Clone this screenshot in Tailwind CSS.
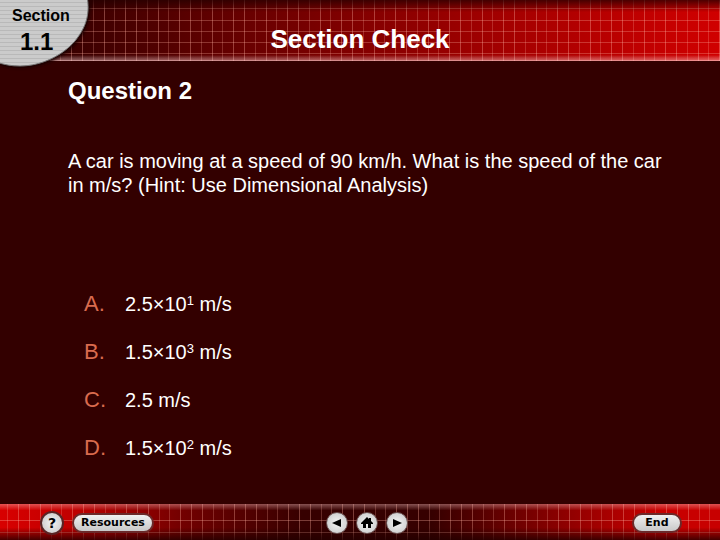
<!doctype html>
<html lang="en">
  <head>
    <meta charset="UTF-8" />
    <meta name="viewport" content="width=device-width, initial-scale=1.0" />
    <title>Section Check</title>
    <script src="https://cdn.jsdelivr.net/npm/@tailwindcss/browser@4"></script>
  </head>
  <body
    class="flex min-h-screen flex-col bg-[#330000] font-['Liberation_Sans',Arial,sans-serif] text-white">
    <!-- Header -->
    <header class="relative flex h-[61px] items-end justify-center pb-1">
      <svg class="absolute inset-0 h-full w-full" aria-hidden="true">
        <defs>
          <linearGradient id="head-red">
            <stop offset="0.1" stop-color="#3a0000" />
            <stop offset="0.35" stop-color="#6a0000" />
            <stop offset="0.65" stop-color="#9c0000" />
            <stop offset="1" stop-color="#d00000" />
          </linearGradient>
          <linearGradient id="head-shade" x2="0" y2="1">
            <stop offset="0" stop-color="#200" stop-opacity="0.75" />
            <stop offset="0.2" stop-color="#200" stop-opacity="0" />
            <stop offset="0.9" stop-color="#fff" stop-opacity="0" />
            <stop offset="1" stop-color="#fcc" stop-opacity="0.5" />
          </linearGradient>
          <pattern id="head-cols" x="28" width="54" height="61" patternUnits="userSpaceOnUse">
            <path d="M0.5 0V61M22.5 0V61M43.5 0V61" stroke="#ffb0a0" stroke-opacity="0.36" />
            <path d="M11.5 0V61M32.5 0V61" stroke="#ffb0a0" stroke-opacity="0.24" />
          </pattern>
        </defs>
        <rect width="100%" height="61" fill="url(#head-red)" />
        <rect width="100%" height="61" fill="url(#head-cols)" />
        <g fill="#ffb0a0" fill-opacity="0.3">
          <rect y="8" width="100%" height="1" />
          <rect y="20" width="100%" height="1" />
          <rect y="31" width="100%" height="1" />
          <rect y="42" width="100%" height="1" />
          <rect y="53" width="100%" height="1" />
        </g>
        <rect width="100%" height="61" fill="url(#head-shade)" />
        <rect y="60" width="100%" height="1" fill="#ffd0d0" fill-opacity="0.4" />
      </svg>
      <h1 class="relative text-[26px] leading-9 font-bold">Section Check</h1>

      <!-- Section badge -->
      <div class="absolute top-0 left-0 h-[72px] w-24 text-black">
        <svg class="absolute inset-0" width="96" height="72" viewBox="0 0 96 72" aria-hidden="true">
          <defs>
            <pattern id="badge-lines" width="4" height="4" patternUnits="userSpaceOnUse">
              <rect width="4" height="4" fill="#cbcbcb" />
              <rect y="2" width="4" height="1" fill="#b9b9b9" />
            </pattern>
            <filter id="badge-blur" x="-10%" y="-10%" width="120%" height="120%">
              <feGaussianBlur stdDeviation="1.5" />
            </filter>
          </defs>
          <path d="M-4 -4H89C92 14 89 27 77 42C65 57 43 68 20 68C12 68 5 67 -4 64Z" fill="#150000" filter="url(#badge-blur)" />
          <path d="M-4 -4H87C90 13 87 26 75 41C63 55 42 66 20 66C12 66 5 65 -4 62Z" fill="url(#badge-lines)" stroke="#777" stroke-width="1" />
        </svg>
        <p class="relative flex flex-col pt-2 pl-3 font-bold">
          <span class="text-base leading-4">Section</span>
          <span class="pt-1 pl-2 text-2xl leading-7">1.1</span>
        </p>
      </div>
    </header>

    <!-- Question -->
    <main class="flex-1 pr-10 pl-[68px]">
      <h2 class="pt-4 text-2xl leading-7 font-bold">Question 2</h2>
      <p class="pt-11 text-xl leading-6">
        A car is moving at a speed of 90 km/h. What is the speed of the car in
        m/s? (Hint: Use Dimensional Analysis)
      </p>
      <ol class="mt-[93px] flex flex-col gap-5 pl-4 text-xl leading-7">
        <li class="flex">
          <span class="w-[41px] text-[22px] text-[#d96b4e]">A.</span>
          <span>2.5×10<sup class="text-[13px]">1</sup> m/s</span>
        </li>
        <li class="flex">
          <span class="w-[41px] text-[22px] text-[#d96b4e]">B.</span>
          <span>1.5×10<sup class="text-[13px]">3</sup> m/s</span>
        </li>
        <li class="flex">
          <span class="w-[41px] text-[22px] text-[#d96b4e]">C.</span>
          <span>2.5 m/s</span>
        </li>
        <li class="flex">
          <span class="w-[41px] text-[22px] text-[#d96b4e]">D.</span>
          <span>1.5×10<sup class="text-[13px]">2</sup> m/s</span>
        </li>
      </ol>
    </main>

    <!-- Navigation -->
    <footer class="relative h-9">
      <svg class="absolute inset-0 h-full w-full" aria-hidden="true">
        <defs>
          <linearGradient id="foot-red">
            <stop offset="0" stop-color="#d80000" />
            <stop offset="0.1" stop-color="#c00000" />
            <stop offset="0.25" stop-color="#740000" />
            <stop offset="0.42" stop-color="#360000" />
            <stop offset="0.6" stop-color="#360000" />
            <stop offset="0.78" stop-color="#8c0000" />
            <stop offset="0.92" stop-color="#c80000" />
            <stop offset="1" stop-color="#c80000" />
          </linearGradient>
          <linearGradient id="foot-shade" x2="0" y2="1">
            <stop offset="0" stop-color="#fcc" stop-opacity="0.4" />
            <stop offset="0.18" stop-color="#fcc" stop-opacity="0" />
            <stop offset="0.65" stop-color="#200" stop-opacity="0" />
            <stop offset="1" stop-color="#200" stop-opacity="0.8" />
          </linearGradient>
          <pattern id="foot-cols" x="29" width="54" height="36" patternUnits="userSpaceOnUse">
            <path d="M0.5 0V36M11.5 0V36M43.5 0V36" stroke="#ffb0a0" stroke-opacity="0.34" />
            <path d="M22.5 0V36M32.5 0V36" stroke="#ffb0a0" stroke-opacity="0.24" />
          </pattern>
        </defs>
        <rect width="100%" height="36" fill="url(#foot-red)" />
        <rect width="100%" height="36" fill="url(#foot-cols)" />
        <rect y="16" width="100%" height="1" fill="#ffb0a0" fill-opacity="0.34" />
        <rect y="28" width="100%" height="1" fill="#ffb0a0" fill-opacity="0.34" />
        <rect width="100%" height="36" fill="url(#foot-shade)" />
      </svg>
      <nav
        class="relative grid grid-cols-3 items-center px-10 pt-[7px] font-['DejaVu_Sans',Verdana,sans-serif] text-[11px] font-bold text-black">
        <div class="flex items-center gap-2">
          <button
            aria-label="Help"
            class="size-6 rounded-full border-2 border-[#5a2424] bg-radial from-[#f4f4f4] to-[#c4c4c4] text-sm leading-5">
            ?
          </button>
          <button
            class="h-5 w-[82px] rounded-full border-2 border-[#6b2a2a] bg-linear-to-b from-[#f0f0f0] to-[#c8c8c8] text-[11px] leading-4">
            Resources
          </button>
        </div>
        <div class="flex items-center justify-center gap-2 pl-[14px]">
          <button
            aria-label="Previous"
            class="flex size-[22px] items-center justify-center rounded-full border border-[#6b5050] bg-radial from-[#f4f4f4] to-[#c4c4c4]">
            <svg width="10" height="10" viewBox="0 0 10 10"><path d="M9 1V9L0 5Z" /></svg>
          </button>
          <button
            aria-label="Home"
            class="flex size-[22px] items-center justify-center rounded-full border border-[#6b5050] bg-radial from-[#f4f4f4] to-[#c4c4c4]">
            <svg width="12" height="12" viewBox="0 0 12 12"><path d="M6 0L8 2V1H10V4L12 6V7H10V11H7V7H5V11H2V7H0V6Z" /></svg>
          </button>
          <button
            aria-label="Next"
            class="flex size-[22px] items-center justify-center rounded-full border border-[#6b5050] bg-radial from-[#f4f4f4] to-[#c4c4c4]">
            <svg width="10" height="10" viewBox="0 0 10 10"><path d="M1 1V9L10 5Z" /></svg>
          </button>
        </div>
        <div class="-mr-0.5 flex justify-end">
          <button
            class="h-5 w-[50px] rounded-full border-2 border-[#6b2a2a] bg-linear-to-b from-[#f0f0f0] to-[#c8c8c8] text-[11px] leading-4">
            End
          </button>
        </div>
      </nav>
    </footer>
  </body>
</html>
